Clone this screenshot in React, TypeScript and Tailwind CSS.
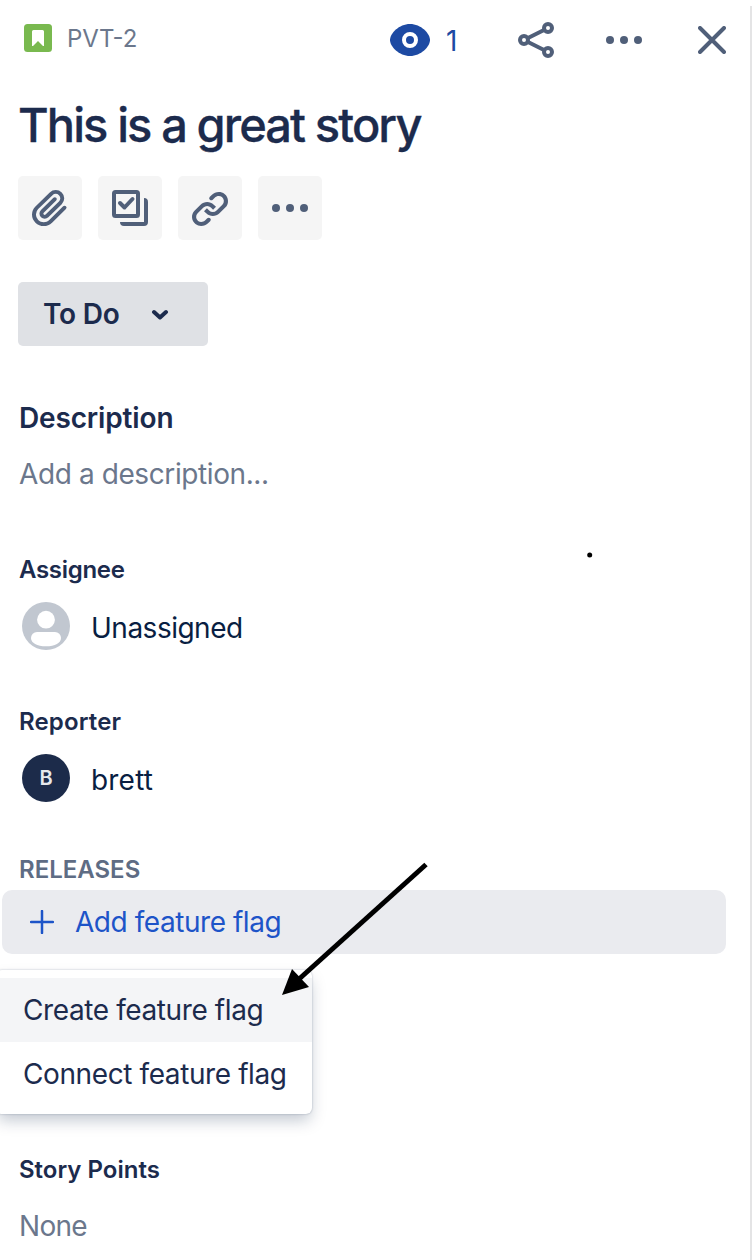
import type { ReactNode } from "react";

function Dots() {
  return (
    <svg width="40" height="16" viewBox="0 0 40 16" fill="#505F79">
      <circle cx="6" cy="8" r="4" />
      <circle cx="20" cy="8" r="4" />
      <circle cx="34" cy="8" r="4" />
    </svg>
  );
}

function StoryIcon() {
  return (
    <svg width="28" height="28" viewBox="0 0 28 28">
      <rect width="28" height="28" rx="3.5" fill="#79B94F" />
      <path d="M9.5 6h9A1.5 1.5 0 0 1 20 7.500V22h-1l-5-5-5 5H8V7.500A1.500 1.500 0 0 1 9.500 6z" fill="#fff" />
    </svg>
  );
}

function EyeIcon() {
  return (
    <svg width="40" height="32" viewBox="0 0 40 32">
      <path d="M20 0C9 0 0 9.500 0 16s9 16 20 16 20-9.500 20-16S31 0 20 0z" fill="#1D4AA3" />
      <circle cx="20" cy="16" r="6" fill="none" stroke="#fff" strokeWidth="4" />
    </svg>
  );
}

function ShareIcon() {
  return (
    <svg width="36" height="36" viewBox="0 0 36 36" fill="none" stroke="#505F79" strokeWidth="4">
      <path d="M9.500 16.200 26.500 7.700M9.500 19.800l17 8.500" />
      <circle cx="6" cy="18" r="4" />
      <circle cx="30" cy="6" r="4" />
      <circle cx="30" cy="30" r="4" />
    </svg>
  );
}

function CloseIcon() {
  return (
    <svg width="28" height="28" viewBox="0 0 28 28" fill="none" stroke="#505F79" strokeWidth="4" strokeLinecap="round">
      <path d="M2 2l24 24M26 2 2 26" />
    </svg>
  );
}

function AttachIcon() {
  return (
    <svg width="48" height="48" viewBox="0 0 24 24" fill="#505F79">
      <path d="M11.643 17.965c-1.530 1.495-4.016 1.496-5.542.004a3.773 3.773 0 0 1 .002-5.412l7.147-6.985a2.316 2.316 0 0 1 3.233-.003c.893.873.895 2.282.004 3.153l-6.703 6.550a.653.653 0 0 1-.914-.008.620.620 0 0 1 0-.902l6.229-6.087a.941.941 0 0 0 0-1.353.995.995 0 0 0-1.384 0l-6.230 6.087a2.502 2.502 0 0 0 0 3.607 2.643 2.643 0 0 0 3.683.009l6.703-6.550a4.074 4.074 0 0 0-.003-5.859 4.306 4.306 0 0 0-6.002.003l-7.148 6.985a5.655 5.655 0 0 0-.001 8.118c2.290 2.237 6.015 2.238 8.308-.004l6.941-6.783a.940.940 0 0 0 0-1.353.995.995 0 0 0-1.384 0l-6.940 6.783z" />
    </svg>
  );
}

function ChecklistIcon() {
  return (
    <svg width="48" height="48" viewBox="0 0 48 48" fill="none" stroke="#505F79" strokeWidth="4">
      <rect x="8" y="8" width="24" height="24" rx="1.500" />
      <path d="M14 19l4.500 4.500 8-8.500" strokeLinecap="round" strokeLinejoin="round" />
      <path d="M38 14a4 4 0 0 1 4 4v20a4 4 0 0 1-4 4H18a4 4 0 0 1-4-4h24z" fill="#505F79" stroke="none" />
    </svg>
  );
}

function LinkIcon() {
  return (
    <svg width="48" height="48" viewBox="0 0 24 24" fill="#505F79">
      <path d="M12.856 5.457l-.937.920a1.002 1.002 0 0 0 0 1.437 1.047 1.047 0 0 0 1.463 0l.984-.966c.967-.950 2.542-1.135 3.602-.288a2.540 2.540 0 0 1 .203 3.810l-2.903 2.852a2.646 2.646 0 0 1-3.696 0l-1.110-1.090L9 13.570l1.108 1.089c1.822 1.788 4.802 1.788 6.622 0l2.905-2.852a4.558 4.558 0 0 0-.357-6.820c-1.893-1.517-4.695-1.226-6.422.470" />
      <path d="M11.144 19.543l.937-.920a1.002 1.002 0 0 0 0-1.437 1.047 1.047 0 0 0-1.462 0l-.985.966c-.967.950-2.542 1.135-3.602.288a2.540 2.540 0 0 1-.203-3.810l2.903-2.852a2.646 2.646 0 0 1 3.696 0l1.110 1.090L15 11.430l-1.108-1.089c-1.822-1.788-4.802-1.788-6.622 0l-2.905 2.852a4.558 4.558 0 0 0 .357 6.820c1.893 1.517 4.695 1.226 6.422-.470" />
    </svg>
  );
}

function PersonAvatar() {
  return (
    <svg width="48" height="48" viewBox="0 0 48 48">
      <circle cx="24" cy="24" r="24" fill="#C1C7D0" />
      <circle cx="24" cy="17.700" r="8.900" fill="#fff" />
      <path d="M15 30h18a6 6 0 0 1 6 6c0 5-6 8.300-15 8.300S9 41 9 36a6 6 0 0 1 6-6z" fill="#fff" />
    </svg>
  );
}

function ToolButton({ label, children }: { label: string; children: ReactNode }) {
  return (
    <button aria-label={label} className="flex size-16 items-center justify-center rounded-[5px] bg-[#F5F5F5]">
      {children}
    </button>
  );
}

export default function App() {
  return (
    <div className="relative h-[1260px] w-[752px] overflow-hidden bg-white font-['Inter',sans-serif] text-[28px] leading-8 whitespace-nowrap text-[#1C2B4D]">
      <div className="flex h-full">
        <main className="flex w-[750px] flex-col">
          <header className="flex h-20 items-center pl-6">
            <div className="-mt-1 flex"><StoryIcon /></div>
            <span className="-mt-0.5 ml-[15px] w-[308px] text-2xl leading-8 text-[#6B778C]">PVT-2</span>
            <button className="ml-[15px] flex w-[128px] items-center text-[#1D4AA3]">
              <EyeIcon />
              <span className="ml-[16px] pt-px">1</span>
            </button>
            <ShareIcon />
            <div className="ml-[50px] flex"><Dots /></div>
            <div className="ml-[54px] flex"><CloseIcon /></div>
          </header>

          <h1 className="mt-[15px] pl-[18px] text-[47px] leading-[60px] font-medium tracking-[-1.9px] [-webkit-text-stroke:0.3px_#1C2B4D]">This is a great story</h1>

          <div className="mt-[21px] flex gap-4 pl-[18px]">
            <ToolButton label="Attach"><AttachIcon /></ToolButton>
            <ToolButton label="Add a child issue"><ChecklistIcon /></ToolButton>
            <ToolButton label="Link issue"><LinkIcon /></ToolButton>
            <ToolButton label="More"><Dots /></ToolButton>
          </div>

          <button className="mt-[42px] ml-[18px] flex h-16 w-[190px] items-center rounded-[5px] bg-[#DFE1E5] pl-[25px] font-semibold">
            <span className="w-[108px] text-left tracking-[-0.2px]">To Do</span>
            <svg width="18" height="12" viewBox="0 0 18 12" fill="none" stroke="#1C2B4D" strokeWidth="4" strokeLinecap="round" strokeLinejoin="round">
              <path d="M3 4l6 5.500L15 4" />
            </svg>
          </button>

          <h2 className="mt-[56px] pl-[19px] font-semibold tracking-[-0.15px]">Description</h2>
          <p className="mt-[24px] pl-[19px] tracking-[-0.4px] text-[#6B778C]">Add a description...</p>

          <h3 className="mt-[64px] pl-[19px] text-2xl leading-8 font-semibold tracking-[-0.3px]">Assignee</h3>
          <div className="mt-[16px] flex h-12 items-center pl-[22px]">
            <PersonAvatar />
            <span className="mt-1 ml-[21px] tracking-[-0.5px] text-[#091E42]">Unassigned</span>
          </div>

          <h3 className="mt-[56px] pl-[19px] text-2xl leading-8 font-semibold tracking-[0.15px]">Reporter</h3>
          <div className="mt-[16px] flex h-12 items-center pl-[22px]">
            <div className="flex size-12 items-center justify-center rounded-full bg-[#1C2B4A] text-xl font-semibold text-[#E6E8EC]">B</div>
            <span className="mt-1 ml-[21px] tracking-[0.2px] text-[#091E42]">brett</span>
          </div>

          <h3 className="mt-[52px] pl-[19px] text-2xl leading-8 font-semibold text-[#5E6C84]">RELEASES</h3>
          <button className="mt-[4px] ml-[2px] flex h-16 w-[724px] items-center rounded-[10px] bg-[#EAEBEF] pl-[28px] text-[#1D54C8]">
            <svg width="24" height="24" viewBox="0 0 24 24" fill="none" stroke="#1D54C8" strokeWidth="2.500" strokeLinecap="round">
              <path d="M12 1v22M1 12h22" />
            </svg>
            <span className="ml-[21px] tracking-[-0.45px]">Add feature flag</span>
          </button>

          <div className="mt-4 -ml-1 flex w-[316px] flex-col rounded-[6px] bg-white py-2 shadow-[0_0_2px_rgba(9,30,66,0.31),0_8px_16px_-2px_rgba(9,30,66,0.25)]">
            <div className="flex h-16 items-center bg-[#F4F5F7] pl-[27px] tracking-[-0.4px]">Create feature flag</div>
            <div className="flex h-16 items-center pl-[27px] tracking-[-0.4px]">Connect feature flag</div>
          </div>

          <h3 className="mt-[40px] pl-[19px] text-2xl leading-8 font-semibold">Story Points</h3>
          <p className="mt-[24px] pl-[19px] tracking-[-0.7px] text-[#6B778C]">None</p>
        </main>
        <div className="mt-1.5 w-0.5 bg-[#E4E4E5]" />
      </div>

      <svg className="pointer-events-none absolute top-0 left-0" width="752" height="1260" viewBox="0 0 752 1260">
        <path d="M426 864.500 298 980" stroke="#000" strokeWidth="5" />
        <path d="M282 995l10-26 17 18z" />
        <circle cx="589.700" cy="555" r="2.500" />
      </svg>
    </div>
  );
}
